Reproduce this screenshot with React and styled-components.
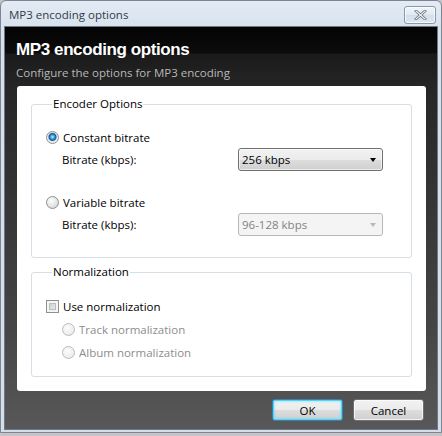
import React from "react";
import styled, { createGlobalStyle } from "styled-components";

const GlobalStyle = createGlobalStyle`
  html, body {
    margin: 0;
    padding: 0;
    background: #c4c4c4;
  }
  body {
    font-family: "Open Sans", "Noto Sans", sans-serif;
    font-size: 12px;
  }
`;

const uiFont = `"Open Sans", "Noto Sans", sans-serif`;

const Window = styled.div`
  box-sizing: border-box;
  width: 442px;
  height: 433px;
  border: 1px solid #7c8591;
  border-radius: 6px 6px 0 0;
  background: linear-gradient(#e3ebf4, #d6e1ed 30px, #d4dfeb);
  padding: 0 3px 2px 3px;
  display: flex;
  flex-direction: column;
`;

const TitleBar = styled.div`
  height: 25px;
  display: flex;
  align-items: center;
  justify-content: space-between;
  padding: 0 2px 0 5px;
`;

const TitleText = styled.span`
  font-family: ${uiFont};
  font-size: 11.5px;
  color: #333c48;
  padding-top: 1px;
`;

const CloseButton = styled.button`
  box-sizing: border-box;
  width: 32px;
  height: 18px;
  margin-top: 3px;
  border: 1px solid #8a97a8;
  border-radius: 3px;
  background: linear-gradient(#f2f6fa, #dfe8f1 50%, #d3dfec 51%, #dde6f0);
  box-shadow: inset 0 0 0 1px rgba(255, 255, 255, 0.7);
  display: flex;
  align-items: center;
  justify-content: center;
  padding: 0;
`;

const Content = styled.div`
  flex: 1;
  border: 1px solid #6c7886;
  background: linear-gradient(
    #030303 0,
    #0c0c0c 26px,
    #1a1a1a 27px,
    #262626 60px,
    #363636 45%,
    #454545 75%,
    #585858 100%
  );
  display: flex;
  flex-direction: column;
`;

const Header = styled.div`
  padding: 14px 12px 0 11px;
  height: 59px;
  box-sizing: border-box;
`;

const Heading = styled.h1`
  margin: 0;
  font-family: "Liberation Sans", Arial, sans-serif;
  font-weight: bold;
  font-size: 17px;
  letter-spacing: -0.4px;
  line-height: 18px;
  color: #ffffff;
`;

const SubHeading = styled.p`
  margin: 6px 0 0 0;
  font-family: ${uiFont};
  font-size: 11.5px;
  line-height: 16px;
  color: #b8b8b8;
`;

const Panel = styled.div`
  margin: 0 11px 0 12px;
  background: #ffffff;
  border-radius: 3px;
  padding: 10px 14px 14px 14px;
  display: flex;
  flex-direction: column;
  gap: 6px;
`;

const Group = styled.fieldset`
  margin: 0;
  min-width: 0;
  border: 1px solid #d5dfe5;
  border-radius: 3px;
  padding: ${(p) => p.$pad};
  display: flex;
  flex-direction: column;
  gap: ${(p) => p.$gap};
`;

const Legend = styled.legend`
  font-family: ${uiFont};
  font-size: 11.5px;
  line-height: 16px;
  color: #000;
  padding: 0 1px;
  margin-left: 6px;
`;

const OptionRow = styled.div`
  display: flex;
  align-items: center;
  gap: 4px;
  height: 16px;
  margin-top: ${(p) => p.$space || "0"};
  padding-left: ${(p) => (p.$indent ? "16px" : "0")};
  font-family: ${uiFont};
  font-size: 11.5px;
  color: ${(p) => (p.$disabled ? "#8d8d8d" : "#000")};
`;

const SettingRow = styled.div`
  display: grid;
  grid-template-columns: 176px 145px;
  align-items: center;
  padding-left: 16px;
  font-family: ${uiFont};
  font-size: 11.5px;
  color: #000;
`;

const Radio = styled.span`
  box-sizing: border-box;
  width: 13px;
  height: 13px;
  border-radius: 50%;
  border: 1px solid ${(p) => (p.$disabled ? "#bcbcbc" : "#8e8f8f")};
  background: ${(p) =>
    p.$checked
      ? "radial-gradient(circle at 50% 45%, #c6ecff 0, #3d9cd8 2px, #0f5a99 3.5px, #dce4ea 4.5px, #f6f6f6 6px)"
      : p.$disabled
      ? "radial-gradient(circle at 40% 35%, #fcfcfc, #e6e6e6)"
      : "radial-gradient(circle at 40% 35%, #ffffff, #dcdcdc 70%, #cfcfcf)"};
  flex-shrink: 0;
`;

const Checkbox = styled.span`
  box-sizing: border-box;
  width: 13px;
  height: 13px;
  border: 1px solid #8e8f8f;
  background: #f4f4f4;
  box-shadow: inset 0 0 0 2px #f4f4f4, inset 0 0 0 3px #bdbdbd;
  background-image: linear-gradient(135deg, #c9c9c9, #f0f0f0);
  background-clip: content-box;
  padding: 2px;
  flex-shrink: 0;
`;

const Select = styled.div`
  box-sizing: border-box;
  height: 23px;
  border: 1px solid ${(p) => (p.$disabled ? "#b4b8bb" : "#707070")};
  border-radius: 3px;
  background: ${(p) =>
    p.$disabled
      ? "#f4f4f4"
      : "linear-gradient(#f2f2f2, #ebebeb 50%, #dddddd 51%, #cfcfcf)"};
  box-shadow: ${(p) =>
    p.$disabled ? "none" : "inset 0 0 0 1px rgba(255,255,255,0.6)"};
  color: ${(p) => (p.$disabled ? "#838383" : "#000")};
  display: flex;
  align-items: center;
  justify-content: space-between;
  padding: 0 6px 0 3px;
`;

const Arrow = styled.span`
  width: 0;
  height: 0;
  border-left: 3.5px solid transparent;
  border-right: 3.5px solid transparent;
  border-top: 4px solid ${(p) => (p.$disabled ? "#b9b9b9" : "#000")};
`;

const Footer = styled.div`
  display: flex;
  justify-content: flex-end;
  gap: 10px;
  padding: 8px 13px 0 0;
`;

const Button = styled.button`
  box-sizing: border-box;
  width: 71px;
  height: 22px;
  border-radius: 3px;
  border: 1px solid ${(p) => (p.$focused ? "#3c7fb1" : "#707070")};
  background: linear-gradient(#f2f2f2, #ebebeb 50%, #dddddd 51%, #cfcfcf);
  box-shadow: ${(p) =>
    p.$focused
      ? "inset 0 0 0 1px #48d8fb, inset 0 0 2px 2px rgba(72,216,251,0.35)"
      : "inset 0 0 0 1px rgba(255,255,255,0.7)"};
  font-family: ${uiFont};
  font-size: 11.5px;
  color: #000;
  padding: 0;
`;

const CloseIcon = () => (
  <svg width="13" height="10" viewBox="0 0 13 10">
    <path
      d="M2 1 L11 9 M11 1 L2 9"
      stroke="#5a6470"
      strokeWidth="2.6"
      strokeLinecap="square"
    />
    <path
      d="M2 1 L11 9 M11 1 L2 9"
      stroke="#f4f6f8"
      strokeWidth="1.2"
      strokeLinecap="square"
    />
  </svg>
);

export default function App() {
  return (
    <>
      <GlobalStyle />
      <Window>
        <TitleBar>
          <TitleText>MP3 encoding options</TitleText>
          <CloseButton aria-label="Close">
            <CloseIcon />
          </CloseButton>
        </TitleBar>
        <Content>
          <Header>
            <Heading>MP3 encoding options</Heading>
            <SubHeading>Configure the options for MP3 encoding</SubHeading>
          </Header>
          <Panel>
            <Group $pad="17px 14px 21px 14px" $gap="3px">
              <Legend>Encoder Options</Legend>
              <OptionRow>
                <Radio $checked />
                Constant bitrate
              </OptionRow>
              <SettingRow>
                <span>Bitrate (kbps):</span>
                <Select>
                  256 kbps
                  <Arrow />
                </Select>
              </SettingRow>
              <OptionRow $space="20px">
                <Radio />
                Variable bitrate
              </OptionRow>
              <SettingRow>
                <span>Bitrate (kbps):</span>
                <Select $disabled>
                  96-128 kbps
                  <Arrow $disabled />
                </Select>
              </SettingRow>
            </Group>
            <Group $pad="18px 14px 16px 14px" $gap="7px">
              <Legend>Normalization</Legend>
              <OptionRow>
                <Checkbox />
                Use normalization
              </OptionRow>
              <OptionRow $indent $disabled>
                <Radio $disabled />
                Track normalization
              </OptionRow>
              <OptionRow $indent $disabled>
                <Radio $disabled />
                Album normalization
              </OptionRow>
            </Group>
          </Panel>
          <Footer>
            <Button $focused>OK</Button>
            <Button>Cancel</Button>
          </Footer>
        </Content>
      </Window>
    </>
  );
}
